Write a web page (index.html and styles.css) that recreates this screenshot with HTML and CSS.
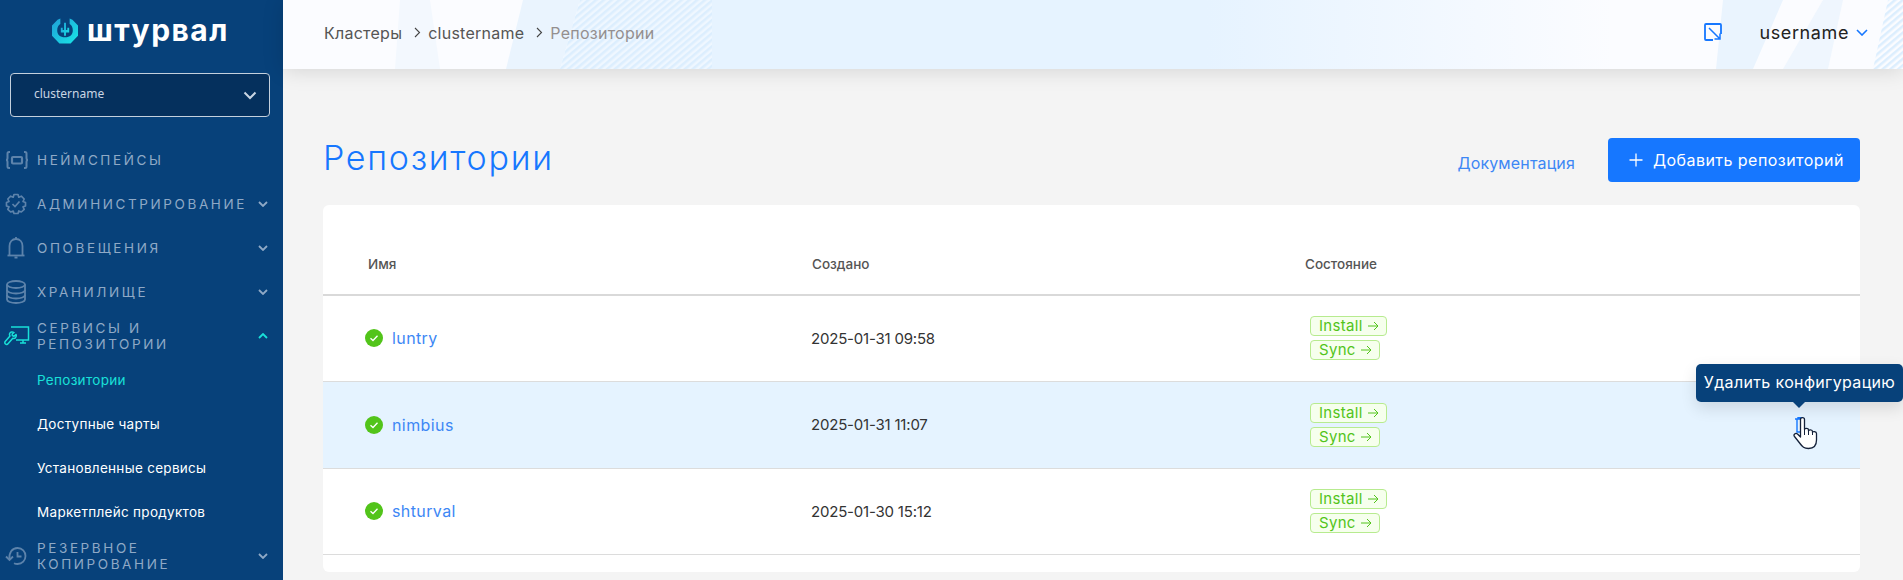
FILE: index.html
```html
<!DOCTYPE html>
<html lang="ru">
<head>
  <meta charset="UTF-8">
  <title>Репозитории</title>
  <link rel="stylesheet" href="styles.css">
</head>
<body>
  <aside class="sidebar">
    <div class="logo">
      <svg class="logo-mark" width="28" height="26" viewBox="0 0 28 28">
        <defs>
          <linearGradient id="logoGrad" x1="0" y1="0" x2="1" y2="1">
            <stop offset="0" stop-color="#1f9fd8"/>
            <stop offset="1" stop-color="#19e6e6"/>
          </linearGradient>
        </defs>
        <path fill="url(#logoGrad)" fill-rule="evenodd" d="M9 0.500V6.500C6.800 7.600 5.600 10 5.600 13.500C5.600 18 8.600 20.800 14 20.800C19.400 20.800 22.400 18 22.400 13.500C22.400 10 21.200 7.600 19 6.500V0.500L22 2L28 8V19L20 27.500H8L0 19V8L6 2Z"/>
        <path fill="url(#logoGrad)" d="M9.500 10.500H11.500V13H13V5H15V13H16.500V10.500H18.500V15.500H15V19H13V15.500H9.500Z"/>
      </svg>
      <span class="logo-text">штурвал</span>
    </div>

    <div class="cluster-select">
      <span>clustername</span>
      <svg width="14" height="9" viewBox="0 0 14 9"><path d="M1.500 1.500L7 7L12.500 1.500" fill="none" stroke="#c9d5e3" stroke-width="2"/></svg>
    </div>

    <nav class="nav">
      <a class="nav-item">
        <svg class="nav-icon" width="24" height="20" viewBox="0 0 24 20" fill="none" stroke="#5d83ab" stroke-width="2">
          <path d="M5 2H4C3 2 2.500 2.500 2.500 3.500V8C2.500 9 2 10 1 10C2 10 2.500 11 2.500 12V16.500C2.500 17.500 3 18 4 18H5"/>
          <path d="M19 2H20C21 2 21.500 2.500 21.500 3.500V8C21.500 9 22 10 23 10C22 10 21.500 11 21.500 12V16.500C21.500 17.500 21 18 20 18H19"/>
          <rect x="7" y="7" width="10" height="6.500" rx="1" stroke-width="2.200"/>
        </svg>
        <span class="nav-label">Неймспейсы</span>
      </a>
      <a class="nav-item">
        <svg class="nav-icon" width="22" height="22" viewBox="0 0 22 22" fill="none" stroke="#5d83ab" stroke-width="1.700">
          <path d="M9 1.500H13L13.800 4.200L16.300 3.200L19.200 6L18 8.500L20.500 9.500V13L18 13.800L19.200 16.300L16.300 19L13.800 18L13 20.500H9L8.200 18L5.700 19L2.800 16.300L4 13.800L1.500 13V9.500L4 8.500L2.800 6L5.700 3.200L8.200 4.200Z" stroke-linejoin="round"/>
          <path d="M7.500 11L10 13.500L14.500 8.500"/>
        </svg>
        <span class="nav-label">Администрирование</span>
        <svg class="chevron" width="10" height="6" viewBox="0 0 10 6"><path d="M1 1L5 5L9 1" fill="none" stroke="#8fa9c6" stroke-width="1.800"/></svg>
      </a>
      <a class="nav-item">
        <svg class="nav-icon" width="22" height="24" viewBox="0 0 22 24" fill="none" stroke="#5d83ab" stroke-width="1.800">
          <path d="M4.500 19V10C4.500 6 7 3 11 3C15 3 17.500 6 17.500 10V19"/>
          <path d="M2.500 19.500H19.500"/>
          <path d="M9.500 21.500H12.500M11 1V3"/>
        </svg>
        <span class="nav-label">Оповещения</span>
        <svg class="chevron" width="10" height="6" viewBox="0 0 10 6"><path d="M1 1L5 5L9 1" fill="none" stroke="#8fa9c6" stroke-width="1.800"/></svg>
      </a>
      <a class="nav-item">
        <svg class="nav-icon" width="22" height="24" viewBox="0 0 22 24" fill="none" stroke="#5d83ab" stroke-width="1.800">
          <ellipse cx="11" cy="4.500" rx="9" ry="3.500"/>
          <path d="M2 4.500V19.500C2 21.500 6 23 11 23C16 23 20 21.500 20 19.500V4.500"/>
          <path d="M2 10C2 12 6 13.500 11 13.500C16 13.500 20 12 20 10M2 15C2 17 6 18.500 11 18.500C16 18.500 20 17 20 15"/>
        </svg>
        <span class="nav-label">Хранилище</span>
        <svg class="chevron" width="10" height="6" viewBox="0 0 10 6"><path d="M1 1L5 5L9 1" fill="none" stroke="#8fa9c6" stroke-width="1.800"/></svg>
      </a>
      <a class="nav-item">
        <svg class="nav-icon nav-icon-wide" width="26" height="20" viewBox="0 0 26 20" fill="none" stroke="#19e0d8" stroke-width="1.500">
          <path d="M7 1H24.500V14H12M19 14V17H16M19 17H22"/>
          <path d="M10 6.500C8.500 5.500 6.500 5.700 5.800 7.200C5.300 8.300 5.500 9.300 6 10L1.200 15.500C0.500 16.400 0.800 17.500 1.500 18C2.300 18.700 3.300 18.500 4 17.700L8.800 12.200C10 12.600 11.500 12 12 10.700C12.400 9.800 12.300 9 12 8.500L10 10.300L8.300 9.500L8.200 8Z" stroke-linejoin="round"/>
        </svg>
        <span class="nav-label nav-label-double">Сервисы и репозитории</span>
        <svg class="chevron" width="10" height="6" viewBox="0 0 10 6"><path d="M1 5L5 1L9 5" fill="none" stroke="#19e0d8" stroke-width="1.800"/></svg>
      </a>
      <a class="nav-sub nav-sub-active">Репозитории</a>
      <a class="nav-sub">Доступные чарты</a>
      <a class="nav-sub">Установленные сервисы</a>
      <a class="nav-sub">Маркетплейс продуктов</a>
      <a class="nav-item">
        <svg class="nav-icon" width="22" height="20" viewBox="0 0 22 20" fill="none" stroke="#5d83ab" stroke-width="1.800">
          <path d="M4.500 13.500C3.700 7 7 2 12.500 2C17.200 2 20.500 5.500 20.500 10C20.500 14.500 17.200 18 12.500 18C11 18 10 17.700 9 17.200"/>
          <path d="M1 10.500L4.500 14L8 10.500M12.500 6V10.500H16.500"/>
        </svg>
        <span class="nav-label nav-label-double">Резервное копирование</span>
        <svg class="chevron" width="10" height="6" viewBox="0 0 10 6"><path d="M1 1L5 5L9 1" fill="none" stroke="#8fa9c6" stroke-width="1.800"/></svg>
      </a>
    </nav>
  </aside>

  <div class="main">
    <header class="topbar">
      <svg class="topbar-bg" width="1620" height="69" viewBox="0 0 1620 69">
        <defs>
          <pattern id="hatch" width="5" height="5" patternUnits="userSpaceOnUse" patternTransform="rotate(-40)">
            <rect width="5" height="2.500" fill="#dceefe"/>
          </pattern>
          <linearGradient id="fadeBlue" x1="0" y1="0" x2="1" y2="0">
            <stop offset="0" stop-color="#e6f3ff"/>
            <stop offset="0.55" stop-color="#e6f3ff"/>
            <stop offset="1" stop-color="#fbfcff"/>
          </linearGradient>
        </defs>
        <polygon points="117,0 147,0 157,69 112,69" fill="#f3f8fe"/>
        <polygon points="240,0 297,0 277,69 223,69" fill="#eaf4fe"/>
        <polygon points="297,0 429,0 429,69 277,69" fill="#eff7ff"/>
        <polygon points="297,0 429,0 429,69 277,69" fill="url(#hatch)"/>
        <rect x="429" width="900" height="69" fill="url(#fadeBlue)"/>
        <polygon points="1440,0 1500,0 1470,69 1433,69" fill="#eaf4fe"/>
        <polygon points="1540,0 1560,0 1545,69 1500,69" fill="#eff6fe"/>
        <polygon points="1605,0 1620,0 1620,69 1590,69" fill="url(#hatch)"/>
      </svg>
      <ol class="breadcrumb">
        <li>Кластеры</li>
        <li class="crumb-sep"><svg width="7" height="11" viewBox="0 0 7 11"><path d="M1 1L5.500 5.500L1 10" fill="none" stroke="#444" stroke-width="1.100"/></svg></li>
        <li>clustername</li>
        <li class="crumb-sep"><svg width="7" height="11" viewBox="0 0 7 11"><path d="M1 1L5.500 5.500L1 10" fill="none" stroke="#444" stroke-width="1.100"/></svg></li>
        <li class="crumb-current">Репозитории</li>
      </ol>
      <div class="topbar-right">
        <svg width="18" height="18" viewBox="0 0 18 18" fill="none" stroke="#1677ff" stroke-width="1.800">
          <path d="M9 17H2C1.400 17 1 16.600 1 16V2C1 1.400 1.400 1 2 1H16C16.600 1 17 1.400 17 2V11"/>
          <path d="M5 5L16 16M16 10.500V16H10.500" stroke-width="1.500"/>
        </svg>
        <span class="username">username</span>
        <svg width="12" height="7" viewBox="0 0 12 7"><path d="M1 1L6 6L11 1" fill="none" stroke="#1677ff" stroke-width="1.600"/></svg>
      </div>
    </header>

    <main class="content">
      <div class="page-head">
        <h1>Репозитории</h1>
        <a class="doc-link">Документация</a>
        <button class="btn-primary">
          <svg width="14" height="14" viewBox="0 0 14 14"><path d="M7 0.500V13.500M0.500 7H13.500" stroke="#fff" stroke-width="1.300"/></svg>
          <span>Добавить репозиторий</span>
        </button>
      </div>

      <section class="card">
        <div class="row row-head">
          <div class="head-cell">Имя</div>
          <div>Создано</div>
          <div>Состояние</div>
        </div>

        <div class="row">
          <div class="name-cell">
            <svg class="status-ok" width="18" height="18" viewBox="0 0 18 18"><circle cx="9" cy="9" r="9" fill="#52c41a"/><path d="M5.500 9.200L8 11.500L12.500 6.800" fill="none" stroke="#fff" stroke-width="1.300"/></svg>
            <a>luntry</a>
          </div>
          <div class="date-cell">2025-01-31 09:58</div>
          <div class="tags">
            <span class="tag">Install <svg width="11" height="10" viewBox="0 0 11 10"><path d="M0 5H10M6 1L10 5L6 9" fill="none" stroke="#52c41a" stroke-width="1"/></svg></span>
            <span class="tag">Sync <svg width="11" height="10" viewBox="0 0 11 10"><path d="M0 5H10M6 1L10 5L6 9" fill="none" stroke="#52c41a" stroke-width="1"/></svg></span>
          </div>
        </div>

        <div class="row row-hover">
          <div class="name-cell">
            <svg class="status-ok" width="18" height="18" viewBox="0 0 18 18"><circle cx="9" cy="9" r="9" fill="#52c41a"/><path d="M5.500 9.200L8 11.500L12.500 6.800" fill="none" stroke="#fff" stroke-width="1.300"/></svg>
            <a>nimbius</a>
          </div>
          <div class="date-cell">2025-01-31 11:07</div>
          <div class="tags">
            <span class="tag">Install <svg width="11" height="10" viewBox="0 0 11 10"><path d="M0 5H10M6 1L10 5L6 9" fill="none" stroke="#52c41a" stroke-width="1"/></svg></span>
            <span class="tag">Sync <svg width="11" height="10" viewBox="0 0 11 10"><path d="M0 5H10M6 1L10 5L6 9" fill="none" stroke="#52c41a" stroke-width="1"/></svg></span>
          </div>
          <div class="row-action">
            <svg width="10" height="16" viewBox="0 0 10 16" fill="none" stroke="#1677ff" stroke-width="1.400"><path d="M0 2H10M2 2V15H9V2M3 2V0.700H7V2"/></svg>
          </div>
          <div class="tooltip">Удалить конфигурацию</div>
          <svg class="hand-cursor" width="28" height="34" viewBox="0 0 28 34">
            <path fill="#fff" stroke="#14213a" stroke-width="1.300" stroke-linejoin="round" d="M7.500 3.500C7.500 1 11.500 1 11.500 3.500V13.500C11.500 12 15.500 12 15.500 13.800V15C15.500 13.500 19.500 13.500 19.500 15.500V16.500C19.500 15 23.500 15.500 23.500 17.500V24C23.500 29 21 32.500 15.500 32.500C11 32.500 9.500 31 7 27.500L1.500 20.500C0 18.500 2.500 16.500 4.500 18L7.500 21Z"/>
            <path d="M11.500 13V19M15.500 14.500V19M19.500 16V19" stroke="#14213a" stroke-width="1"/>
          </svg>
        </div>

        <div class="row">
          <div class="name-cell">
            <svg class="status-ok" width="18" height="18" viewBox="0 0 18 18"><circle cx="9" cy="9" r="9" fill="#52c41a"/><path d="M5.500 9.200L8 11.500L12.500 6.800" fill="none" stroke="#fff" stroke-width="1.300"/></svg>
            <a>shturval</a>
          </div>
          <div class="date-cell">2025-01-30 15:12</div>
          <div class="tags">
            <span class="tag">Install <svg width="11" height="10" viewBox="0 0 11 10"><path d="M0 5H10M6 1L10 5L6 9" fill="none" stroke="#52c41a" stroke-width="1"/></svg></span>
            <span class="tag">Sync <svg width="11" height="10" viewBox="0 0 11 10"><path d="M0 5H10M6 1L10 5L6 9" fill="none" stroke="#52c41a" stroke-width="1"/></svg></span>
          </div>
        </div>
      </section>
    </main>
  </div>
</body>
</html>
```

FILE: styles.css
```css
* {
  box-sizing: border-box;
  margin: 0;
  padding: 0;
}

html, body {
  height: 580px;
  overflow: hidden;
}

body {
  display: flex;
  font-family: "Inter", "Noto Sans", sans-serif;
  background-color: #f4f4f4;
  color: #333;
}

/* sidebar */
.sidebar {
  width: 283px;
  flex-shrink: 0;
  background-color: #07417a;
  color: #fff;
}

.logo {
  height: 62px;
  display: flex;
  align-items: center;
  gap: 8px;
  padding-left: 51px;
}

.logo-text {
  font-size: 30px;
  font-weight: 700;
  line-height: 1;
  letter-spacing: 1.5px;
  margin-top: -3px;
}

.logo-mark {
  margin-top: -1px;
}

.cluster-select {
  margin: 11px 13px 0 10px;
  height: 44px;
  display: flex;
  align-items: center;
  justify-content: space-between;
  padding: 0 12px 4px 23px;
  background-color: #05305d;
  border: 1px solid #c4d0dd;
  border-radius: 4px;
  font-family: "Noto Sans", sans-serif;
  font-size: 12px;
  color: #c9d5e3;
}

.cluster-select svg {
  margin-top: 4px;
}

.nav {
  margin-top: 21px;
}

.nav-item {
  position: relative;
  height: 44px;
  display: flex;
  align-items: center;
  padding-left: 37px;
  padding-right: 15px;
}

.nav-icon {
  position: absolute;
  left: 5px;
  top: 50%;
  transform: translateY(-50%);
}

.nav-icon-wide {
  left: 4px;
}

.nav-label {
  font-size: 13.5px;
  line-height: 16px;
  font-weight: 400;
  text-transform: uppercase;
  letter-spacing: 2.6px;
  color: #8fa9c6;
}

.nav-label-double {
  max-width: 190px;
}

.chevron {
  flex-shrink: 0;
  margin-left: auto;
}

.nav-sub {
  display: flex;
  align-items: center;
  height: 44px;
  padding-left: 37px;
  font-size: 13.5px;
  font-weight: 400;
  letter-spacing: 0.3px;
  color: #fff;
}

.nav-sub-active {
  color: #19e0d8;
}

/* top bar */
.main {
  flex: 1;
  min-width: 0;
  display: flex;
  flex-direction: column;
}

.topbar {
  position: relative;
  height: 69px;
  flex-shrink: 0;
  display: flex;
  align-items: center;
  justify-content: space-between;
  padding: 0 35px 0 41px;
  background-color: #fbfcff;
  box-shadow: 0 2px 20px rgba(0, 0, 0, 0.13);
  z-index: 1;
}

.topbar-bg {
  position: absolute;
  left: 0;
  top: 0;
}

.breadcrumb {
  position: relative;
  display: flex;
  align-items: center;
  list-style: none;
  font-size: 16px;
  letter-spacing: 0.25px;
  color: #555;
  margin-bottom: 4px;
}

.crumb-sep {
  display: flex;
  margin: 0 7px 0 12px;
}

.crumb-current {
  color: #948f8f;
}

.topbar-right {
  position: relative;
  display: flex;
  align-items: center;
  margin-bottom: 5px;
}

.username {
  margin: 0 7px 0 37px;
  font-size: 18px;
  letter-spacing: 0.6px;
  color: #222;
}

/* page */
.content {
  flex: 1;
  padding: 69px 43px 0 40px;
}

.page-head {
  display: flex;
  align-items: center;
  height: 44px;
}

h1 {
  flex: 1;
  padding-bottom: 6px;
  font-size: 34px;
  font-weight: 300;
  color: #1677ff;
  letter-spacing: 1.7px;
}

.doc-link {
  margin: 6px 33px 0 0;
  font-size: 16px;
  letter-spacing: 0.15px;
  color: #3d87f5;
}

.btn-primary {
  width: 252px;
  height: 44px;
  display: flex;
  align-items: center;
  gap: 10px;
  padding-left: 21px;
  border: none;
  border-radius: 4px;
  background-color: #1677ff;
  color: #fff;
  font-family: inherit;
  font-size: 16px;
  font-weight: 400;
  letter-spacing: 0.45px;
}

.card {
  margin-top: 23px;
  height: 367px;
  background: #fff;
  border-radius: 6px;
}

.row {
  position: relative;
  height: 86.500px;
  display: grid;
  grid-template-columns: 446px 493px 1fr;
  align-items: center;
  padding-left: 42px;
  border-bottom: 1px solid #dcdcdc;
}

.row-hover {
  background-color: #e5f3ff;
}

.row-head {
  height: 90.500px;
  padding-top: 30px;
  padding-left: 43px;
  border-bottom: 2px solid #d9d9d9;
  font-size: 13.5px;
  font-weight: 500;
  color: #555;
}

.head-cell {
  padding-left: 2px;
}

.name-cell {
  display: flex;
  align-items: center;
  gap: 9px;
  font-size: 16px;
  letter-spacing: 0.4px;
  color: #3d87f5;
}

.date-cell {
  font-size: 15px;
  letter-spacing: -0.2px;
  color: #333;
}

.tags {
  display: flex;
  flex-direction: column;
  align-items: flex-start;
  gap: 4px;
  padding-left: 6px;
}

.tag {
  height: 20px;
  display: inline-flex;
  align-items: center;
  gap: 5px;
  padding: 0 7px 0 8px;
  border: 1px solid #b7eb8f;
  border-radius: 4px;
  background-color: #f6ffed;
  color: #52c41a;
  font-size: 15px;
  letter-spacing: 0.3px;
  line-height: 18px;
}

.row-action {
  position: absolute;
  left: 1472px;
  top: 35px;
  display: flex;
}

.tooltip {
  position: absolute;
  left: 1373px;
  top: -18px;
  width: 207px;
  height: 38px;
  padding-bottom: 2px;
  display: flex;
  align-items: center;
  justify-content: center;
  border-radius: 5px;
  background-color: #07417a;
  color: #fff;
  font-size: 16px;
  letter-spacing: 0.35px;
  white-space: nowrap;
  box-shadow: 0 6px 16px rgba(0, 0, 0, 0.12);
  z-index: 2;
}

.tooltip::after {
  content: "";
  position: absolute;
  left: 97px;
  bottom: -6px;
  border-left: 6px solid transparent;
  border-right: 6px solid transparent;
  border-top: 6px solid #07417a;
}

.hand-cursor {
  position: absolute;
  left: 1470px;
  top: 34px;
  z-index: 3;
}
```
